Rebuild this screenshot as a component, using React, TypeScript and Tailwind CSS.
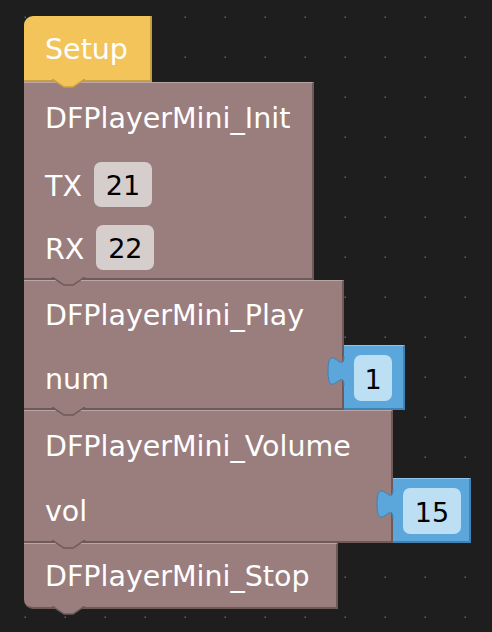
import React from 'react';

// tab that hangs below a statement block and sits in the next block's notch
function NextTab({ fill, edge }: { fill: string; edge: string }) {
  return (
    <svg className="absolute left-[28px] top-full -mt-[1px] z-10" width="34" height="10" viewBox="0 0 34 10">
      <path d="M0,0 L12,8 L21,8 L33,0 Z" fill={fill} />
      <path d="M0,0 L12,8 L21,8 L33,0" fill="none" stroke={edge} strokeWidth="1.5" />
    </svg>
  );
}

function ValueBlock({ value, w, fw }: { value: string; w: string; fw: string }) {
  return (
    <div className={`relative ${w} h-[65px] bg-[#5ba6da] border-t border-t-[#8ec4ea] border-r-2 border-r-[#3f82b3] border-b-2 border-b-[#3f82b3] pl-[10px] pt-[9px]`}>
      <svg className="absolute -left-[17px] top-[10px]" width="18" height="32" viewBox="0 0 18 32">
        <path d="M17,0 c0,20 -16,-16 -16,15 s16,-5 16,15 Z" fill="#5ba6da" />
        <path d="M17,0 c0,20 -16,-16 -16,15 s16,-5 16,15" fill="none" stroke="#3f82b3" strokeWidth="1" />
      </svg>
      <div className={`${fw} h-[46px] rounded-[7px] bg-[#bddff3] flex items-center justify-center text-black text-[27px] pt-[2px]`}>{value}</div>
    </div>
  );
}

function Field({ value }: { value: string }) {
  return (
    <div className="w-[58px] h-[45px] rounded-[7px] bg-[#d6cdcd] flex items-center justify-center text-black text-[27px] pt-[2px]">{value}</div>
  );
}

const BROWN = '#9a7d7d';
const BROWN_EDGE = '#6f5959';

export default function App() {
  return (
    <div className="relative w-[492px] h-[632px] overflow-hidden bg-[#1e1e1e] font-['DejaVu_Sans',sans-serif] text-white text-[28.5px] leading-none">
      <svg className="absolute inset-0 z-0" width="492" height="632">
        <defs>
          <pattern id="grid" width="40" height="40" patternUnits="userSpaceOnUse">
            <rect x="24.5" y="16.5" width="1.5" height="1.5" fill="#626262" />
          </pattern>
        </defs>
        <rect width="492" height="632" fill="url(#grid)" />
      </svg>

      <div className="relative z-10 flex flex-col items-start pl-[24px] pt-[16px]">
        {/* Setup hat */}
        <div className="relative z-50 w-[128px] h-[66px] rounded-tl-[9px] bg-[#f2c45a] border-r-2 border-r-[#c79d43] border-b-2 border-b-[#c79d43] flex items-center pl-[21px] pt-[4px]">
          Setup
          <NextTab fill="#f2c45a" edge="#c79d43" />
        </div>

        {/* Init */}
        <div className="relative z-40 w-[290px] h-[198px] bg-[#9a7d7d] border-t border-t-[#b9a6a6] border-r-2 border-r-[#6f5959] border-b-2 border-b-[#6f5959] flex flex-col pl-[21px]">
          <div className="h-[69px] flex items-center pt-[4px]">DFPlayerMini_Init</div>
          <div className="h-[64px] flex items-center gap-[12px]"><span className="pt-[6px]">TX</span><Field value="21" /></div>
          <div className="h-[62px] flex items-center gap-[12px]"><span className="pt-[6px]">RX</span><Field value="22" /></div>
          <NextTab fill={BROWN} edge={BROWN_EDGE} />
        </div>

        {/* Play */}
        <div className="relative z-30 flex items-end">
          <div className="relative w-[320px] h-[130px] bg-[#9a7d7d] border-t border-t-[#b9a6a6] border-r-2 border-r-[#6f5959] border-b-2 border-b-[#6f5959] flex flex-col pl-[21px]">
            <div className="h-[67px] flex items-center pt-[4px]">DFPlayerMini_Play</div>
            <div className="h-[60px] flex items-center pt-[4px]">num</div>
            <NextTab fill={BROWN} edge={BROWN_EDGE} />
          </div>
          <ValueBlock value="1" w="w-[61px]" fw="w-[38px]" />
        </div>

        {/* Volume */}
        <div className="relative z-20 flex items-end">
          <div className="relative w-[369px] h-[133px] bg-[#9a7d7d] border-t border-t-[#b9a6a6] border-r-2 border-r-[#6f5959] border-b-2 border-b-[#6f5959] flex flex-col pl-[21px]">
            <div className="h-[69px] flex items-center pt-[4px]">DFPlayerMini_Volume</div>
            <div className="h-[61px] flex items-center pt-[4px]">vol</div>
            <NextTab fill={BROWN} edge={BROWN_EDGE} />
          </div>
          <ValueBlock value="15" w="w-[78px]" fw="w-[58px]" />
        </div>

        {/* Stop */}
        <div className="relative z-10 w-[314px] h-[66px] rounded-bl-[9px] bg-[#9a7d7d] border-t border-t-[#b9a6a6] border-r-2 border-r-[#6f5959] border-b-2 border-b-[#6f5959] flex items-center pl-[21px] pt-[4px]">
          DFPlayerMini_Stop
          <NextTab fill={BROWN} edge={BROWN_EDGE} />
        </div>
      </div>
    </div>
  );
}
